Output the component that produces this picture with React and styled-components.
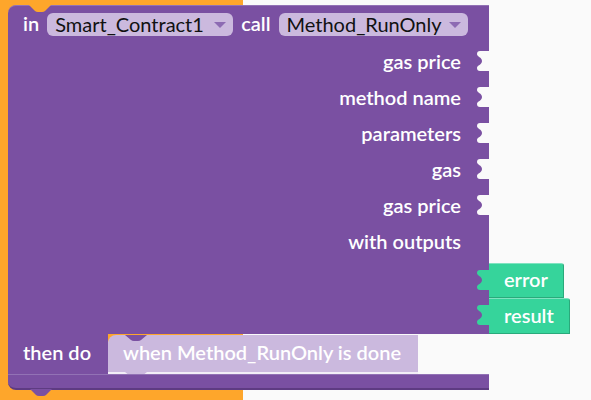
import React from "react";
import styled, { createGlobalStyle } from "styled-components";

const GlobalStyle = createGlobalStyle`
  html, body {
    margin: 0;
    padding: 0;
    background: #fafafa;
  }
  body {
    font-family: Lato, "Noto Sans", sans-serif;
  }
`;

const PURPLE = "#7a50a2";
const PURPLE_DARK = "#5e3b82";
const PURPLE_LIGHT = "#9272b5";
const LILAC = "#cbb9de";
const ORANGE = "#fea62b";
const GREEN = "#36d49b";
const BG = "#fafafa";

const TAB_PATH =
  "M12,0 H3 C1,0 0,1 0,3 C0,6 5,6 5,10 C5,14 0,14 0,17 C0,19 1,20 3,20 H12 Z";

const Canvas = styled.div`
  width: 591px;
  height: 400px;
  overflow: hidden;
  background: ${BG};
`;

const OrangeBlock = styled.div`
  width: 243px;
  height: 400px;
  box-sizing: border-box;
  padding: 5px 0 0 8px;
  background: ${ORANGE};
`;

const PurpleBlock = styled.div`
  width: 481px;
  display: flex;
  flex-direction: column;
  color: #fff;
  font-size: 20px;
  font-weight: 600;
`;

const Body = styled.div`
  position: relative;
  background: ${PURPLE};
  border-top: 1px solid ${PURPLE_LIGHT};
  border-top-left-radius: 8px;
  display: flex;
  flex-direction: column;
`;

const TopNotch = styled.svg`
  position: absolute;
  left: 21px;
  top: -1px;
`;

const HeaderRow = styled.div`
  height: 23px;
  margin: 7px 0 8px;
  padding-left: 15px;
  display: flex;
  align-items: center;
  gap: 8px;
`;

const Word = styled.span`
  line-height: 23px;
  padding-bottom: 2px;
`;

const Pill = styled.div`
  width: ${(p) => p.$w}px;
  height: 23px;
  box-sizing: border-box;
  padding: 0 7px 2px 8px;
  border-radius: 6px;
  background: ${LILAC};
  color: #111;
  font-weight: 400;
  display: flex;
  align-items: center;
  justify-content: space-between;
`;

const Caret = styled.span`
  width: 0;
  height: 0;
  margin-top: 2px;
  border-left: 6px solid transparent;
  border-right: 6px solid transparent;
  border-top: 6px solid #8d6bb3;
`;

const InputRow = styled.div`
  position: relative;
  height: 36px;
  box-sizing: border-box;
  padding: 0 28px 3px 0;
  display: flex;
  align-items: center;
  justify-content: flex-end;
`;

const Socket = styled.svg`
  position: absolute;
  right: 0;
  top: 7px;
`;

const OutputRow = styled.div`
  height: ${(p) => p.$h}px;
  display: flex;
  align-items: flex-end;
  justify-content: flex-end;
`;

const GreenBlock = styled.div`
  position: relative;
  width: ${(p) => p.$w}px;
  height: ${(p) => p.$h}px;
  margin-right: -${(p) => p.$w}px;
  box-sizing: border-box;
  padding: 0 0 3px 15px;
  background: ${GREEN};
  border-top: 1px solid #7fe3c0;
  border-right: 1px solid #2aa97b;
  border-bottom: 1px solid #2aa97b;
  border-top-right-radius: 3px;
  display: flex;
  align-items: center;
`;

const GreenTab = styled.svg`
  position: absolute;
  left: -12px;
  top: 6px;
`;

const StatementRow = styled.div`
  height: 40px;
  display: flex;
`;

const Arm = styled.div`
  width: 100px;
  box-sizing: border-box;
  padding: 0 0 4px 15px;
  background: ${PURPLE};
  display: flex;
  align-items: center;
`;

const Slot = styled.div`
  flex: 1;
  position: relative;
  padding-top: 1px;
`;

const EventBlock = styled.div`
  position: relative;
  width: 310px;
  height: 37px;
  box-sizing: border-box;
  padding: 0 0 3px 15px;
  background: ${LILAC};
  border-top-left-radius: 8px;
  box-shadow: 0 2px 0 #f2eef7;
  display: flex;
  align-items: center;
`;

const EventNotch = styled.svg`
  position: absolute;
  left: 17px;
  top: 0;
`;

const EventTab = styled.svg`
  position: absolute;
  left: 17px;
  bottom: -5px;
`;

const BottomBar = styled.div`
  position: relative;
  height: 16px;
  box-sizing: border-box;
  background: ${PURPLE};
  border-top: 1px solid ${PURPLE_LIGHT};
  border-bottom: 2px solid ${PURPLE_DARK};
  border-bottom-left-radius: 8px;
`;

const BottomTab = styled.svg`
  position: absolute;
  left: 22px;
  bottom: -8px;
`;

function Tab({ as: Comp, fill }) {
  return (
    <Comp width="12" height="20" viewBox="0 0 12 20">
      <path d={TAB_PATH} fill={fill} />
    </Comp>
  );
}

const inputs = ["gas price", "method name", "parameters", "gas", "gas price"];

export default function App() {
  return (
    <Canvas>
      <GlobalStyle />
      <OrangeBlock>
        <PurpleBlock>
          <Body>
            <TopNotch width="22" height="8" viewBox="0 0 22 8">
              <path d="M0,0 L6,6 Q7,7 9,7 H13 Q15,7 16,6 L22,0 Z" fill={ORANGE} />
            </TopNotch>
            <HeaderRow>
              <Word>in</Word>
              <Pill $w={186}>
                Smart_Contract1
                <Caret />
              </Pill>
              <Word>call</Word>
              <Pill $w={189}>
                Method_RunOnly
                <Caret />
              </Pill>
            </HeaderRow>
            {inputs.map((label, i) => (
              <InputRow key={i}>
                {label}
                <Tab as={Socket} fill={BG} />
              </InputRow>
            ))}
            <InputRow>with outputs</InputRow>
            <OutputRow $h={38}>
              <GreenBlock $w={75} $h={35}>
                error
                <Tab as={GreenTab} fill={GREEN} />
              </GreenBlock>
            </OutputRow>
            <OutputRow $h={36}>
              <GreenBlock $w={81} $h={36}>
                result
                <Tab as={GreenTab} fill={GREEN} />
              </GreenBlock>
            </OutputRow>
          </Body>
          <StatementRow>
            <Arm>then do</Arm>
            <Slot>
              <EventBlock>
                <EventNotch width="22" height="7" viewBox="0 0 22 7">
                  <path d="M0,0 L6,5 Q7,6 9,6 H13 Q15,6 16,5 L22,0 Z" fill={PURPLE} />
                </EventNotch>
                when Method_RunOnly is done
                <EventTab width="22" height="5" viewBox="0 0 22 5">
                  <path d="M0,0 L5,4 Q6,5 8,5 H14 Q16,5 17,4 L22,0 Z" fill={LILAC} />
                </EventTab>
              </EventBlock>
            </Slot>
          </StatementRow>
          <BottomBar>
            <BottomTab width="22" height="7" viewBox="0 0 22 7">
              <path d="M0,0 L6,6 Q7,7 9,7 H13 Q15,7 16,6 L22,0 Z" fill={PURPLE} />
            </BottomTab>
          </BottomBar>
        </PurpleBlock>
      </OrangeBlock>
    </Canvas>
  );
}
